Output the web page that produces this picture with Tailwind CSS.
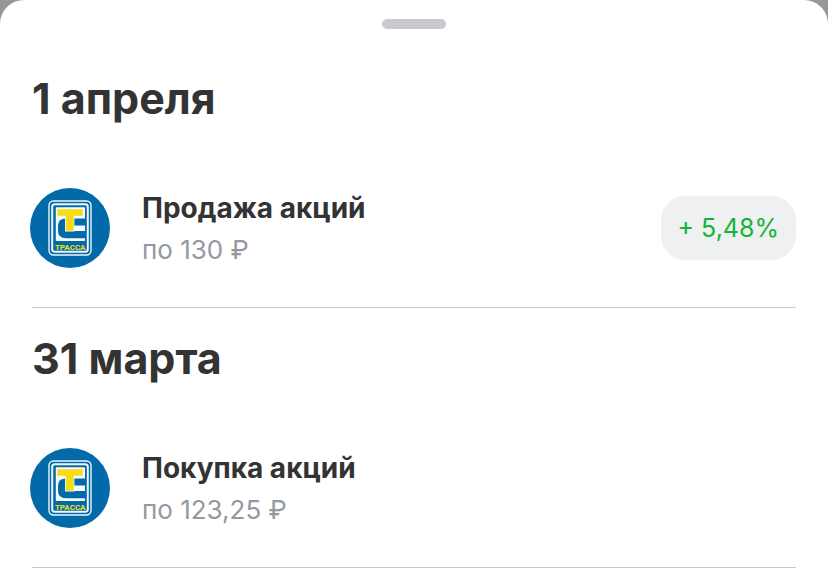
<!DOCTYPE html>
<html lang="ru">
<head>
    <meta charset="UTF-8">
    <meta name="viewport" content="width=device-width, initial-scale=1.0">
    <title>История операций</title>
    <script src="https://cdn.jsdelivr.net/npm/@tailwindcss/browser@4"></script>
</head>
<body class="bg-[#979797] font-['Inter','Liberation_Sans',sans-serif] text-[#333333]">

    <!-- Logo shared by all rows -->
    <svg class="hidden" aria-hidden="true">
        <symbol id="trassa-logo" viewBox="0 0 80 80">
            <circle cx="40" cy="40" r="40" fill="#026aa9"/>
            <rect x="19" y="13" width="42" height="54" rx="4.5" fill="none" stroke="#eef6fb" stroke-width="1.4"/>
            <rect x="22.2" y="16.2" width="35.6" height="47.6" rx="2.5" fill="none" stroke="#eef6fb" stroke-width="2"/>
            <rect x="25.8" y="19.3" width="29.2" height="33.7" rx="1" fill="#f7fafa"/>
            <!-- C -->
            <path d="M55 30.5H36Q28 30.5 28 37.5V43Q28 50.3 36 50.3H55V43H39Q36.5 43 36.5 41V39.5Q36.5 37.5 39 37.5H55Z" fill="#026aa9"/>
            <!-- T -->
            <path d="M26.5 20.5H53.5V28.6H44.4V43.4H35V28.6H26.5Z" fill="#f7fafa"/>
            <path d="M27.3 21.3H52.7V27.8H43.7V42.7H35.8V27.8H27.3Z" fill="#f6dc12"/>
            <text x="40.2" y="61.9" text-anchor="middle" font-family="Roboto" font-size="8" font-weight="700" fill="#f2e01c">ТРАССА</text>
        </symbol>
    </svg>

    <main class="min-h-screen rounded-t-3xl bg-white px-8">
        <div class="flex h-12 justify-center pt-[19px]">
            <div class="h-2.5 w-16 rounded-full bg-[#c8c9d1]"></div>
        </div>

        <section class="border-b border-[#c8c8c8] pt-6 pb-[39px]">
            <h2 class="text-[43px] leading-[52px] font-bold">1 апреля</h2>
            <div class="mt-16 -ml-0.5 flex items-center">
                <svg class="size-20 shrink-0" role="img" aria-label="Трасса"><use href="#trassa-logo"/></svg>
                <div class="-my-0.5 ml-8 grow">
                    <h3 class="text-[28px] leading-[44px] font-bold">Продажа акций</h3>
                    <p class="text-[26px] leading-10 text-[#9499a1]">по 130 ₽</p>
                </div>
                <div class="rounded-3xl bg-[#eef0f1] px-[17px] text-[25px] leading-[64px] text-[#12b434]">+ 5,48%</div>
            </div>
        </section>

        <section class="border-b border-[#c8c8c8] pt-6 pb-[39px]">
            <h2 class="text-[43px] leading-[52px] font-bold">31 марта</h2>
            <div class="mt-16 -ml-0.5 flex items-center">
                <svg class="size-20 shrink-0" role="img" aria-label="Трасса"><use href="#trassa-logo"/></svg>
                <div class="-my-0.5 ml-8 grow">
                    <h3 class="text-[28px] leading-[44px] font-bold">Покупка акций</h3>
                    <p class="text-[26px] leading-10 text-[#9499a1]">по 123,25 ₽</p>
                </div>
            </div>
        </section>
    </main>

</body>
</html>
